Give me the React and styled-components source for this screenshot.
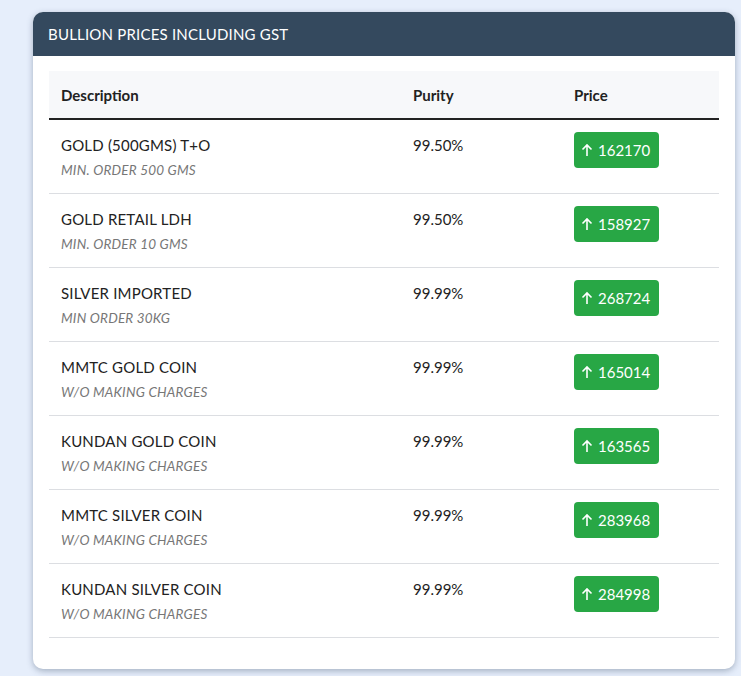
import React from 'react';
import styled, { createGlobalStyle } from 'styled-components';

const Global = createGlobalStyle`
  body {
    margin: 0;
    background: #e6eefb;
    font-family: Lato, "Open Sans", sans-serif;
  }
`;

const Page = styled.div`
  padding: 12px 6px 7px 33px;
`;

const Card = styled.div`
  background: #fff;
  border-radius: 10px;
  overflow: hidden;
  box-shadow: 0 2px 6px rgba(40, 60, 90, 0.35);
  padding-bottom: 31px;
`;

const CardHeader = styled.div`
  background: #34495e;
  color: #fff;
  height: 44px;
  display: flex;
  align-items: center;
  padding: 0 15px;
  font-size: 15px;
  letter-spacing: 0.2px;
`;

const Table = styled.table`
  margin: 15px 16px 0;
  width: calc(100% - 32px);
  table-layout: fixed;
  border-collapse: collapse;
  color: #222;
  font-size: 15px;
`;

const Th = styled.th`
  background: #f7f8fa;
  text-align: left;
  font-weight: 700;
  height: 47px;
  padding: 0 12px;
  border-bottom: 2px solid #222;
  width: ${(p) => p.w || 'auto'};
`;

const Td = styled.td`
  vertical-align: top;
  padding: 12px 12px 0;
  height: 74px;
  box-sizing: border-box;
  border-bottom: 1px solid #dcdee2;
`;

const Name = styled.div`
  margin-top: 4px;
  letter-spacing: 0.2px;
`;

const Note = styled.div`
  margin-top: 8px;
  font-size: 13.5px;
  font-style: italic;
  color: #777;
  letter-spacing: 0.2px;
`;

const Purity = styled.div`
  margin-top: 4px;
`;

const Badge = styled.span`
  display: inline-flex;
  align-items: center;
  gap: 5px;
  height: 36px;
  padding: 0 9px 0 7px;
  border-radius: 4px;
  background: #28a745;
  color: #fff;
  font-size: 15px;
`;

const rows = [
  ['GOLD (500GMS) T+O', 'MIN. ORDER 500 GMS', '99.50%', '162170'],
  ['GOLD RETAIL LDH', 'MIN. ORDER 10 GMS', '99.50%', '158927'],
  ['SILVER IMPORTED', 'MIN ORDER 30KG', '99.99%', '268724'],
  ['MMTC GOLD COIN', 'W/O MAKING CHARGES', '99.99%', '165014'],
  ['KUNDAN GOLD COIN', 'W/O MAKING CHARGES', '99.99%', '163565'],
  ['MMTC SILVER COIN', 'W/O MAKING CHARGES', '99.99%', '283968'],
  ['KUNDAN SILVER COIN', 'W/O MAKING CHARGES', '99.99%', '284998'],
];

const Arrow = () => (
  <svg width="12" height="14" viewBox="0 0 12 14" fill="none" stroke="#fff" strokeWidth="1.6">
    <path d="M6 13V2M1.5 6.5L6 2l4.5 4.5" />
  </svg>
);

export default function App() {
  return (
    <Page>
      <Global />
      <Card>
        <CardHeader>BULLION PRICES INCLUDING GST</CardHeader>
        <Table>
          <thead>
            <tr>
              <Th w="328px">Description</Th>
              <Th w="137px">Purity</Th>
              <Th>Price</Th>
            </tr>
          </thead>
          <tbody>
            {rows.map(([name, note, purity, price]) => (
              <tr key={name}>
                <Td>
                  <Name>{name}</Name>
                  <Note>{note}</Note>
                </Td>
                <Td><Purity>{purity}</Purity></Td>
                <Td>
                  <Badge><Arrow />{price}</Badge>
                </Td>
              </tr>
            ))}
          </tbody>
        </Table>
      </Card>
    </Page>
  );
}
